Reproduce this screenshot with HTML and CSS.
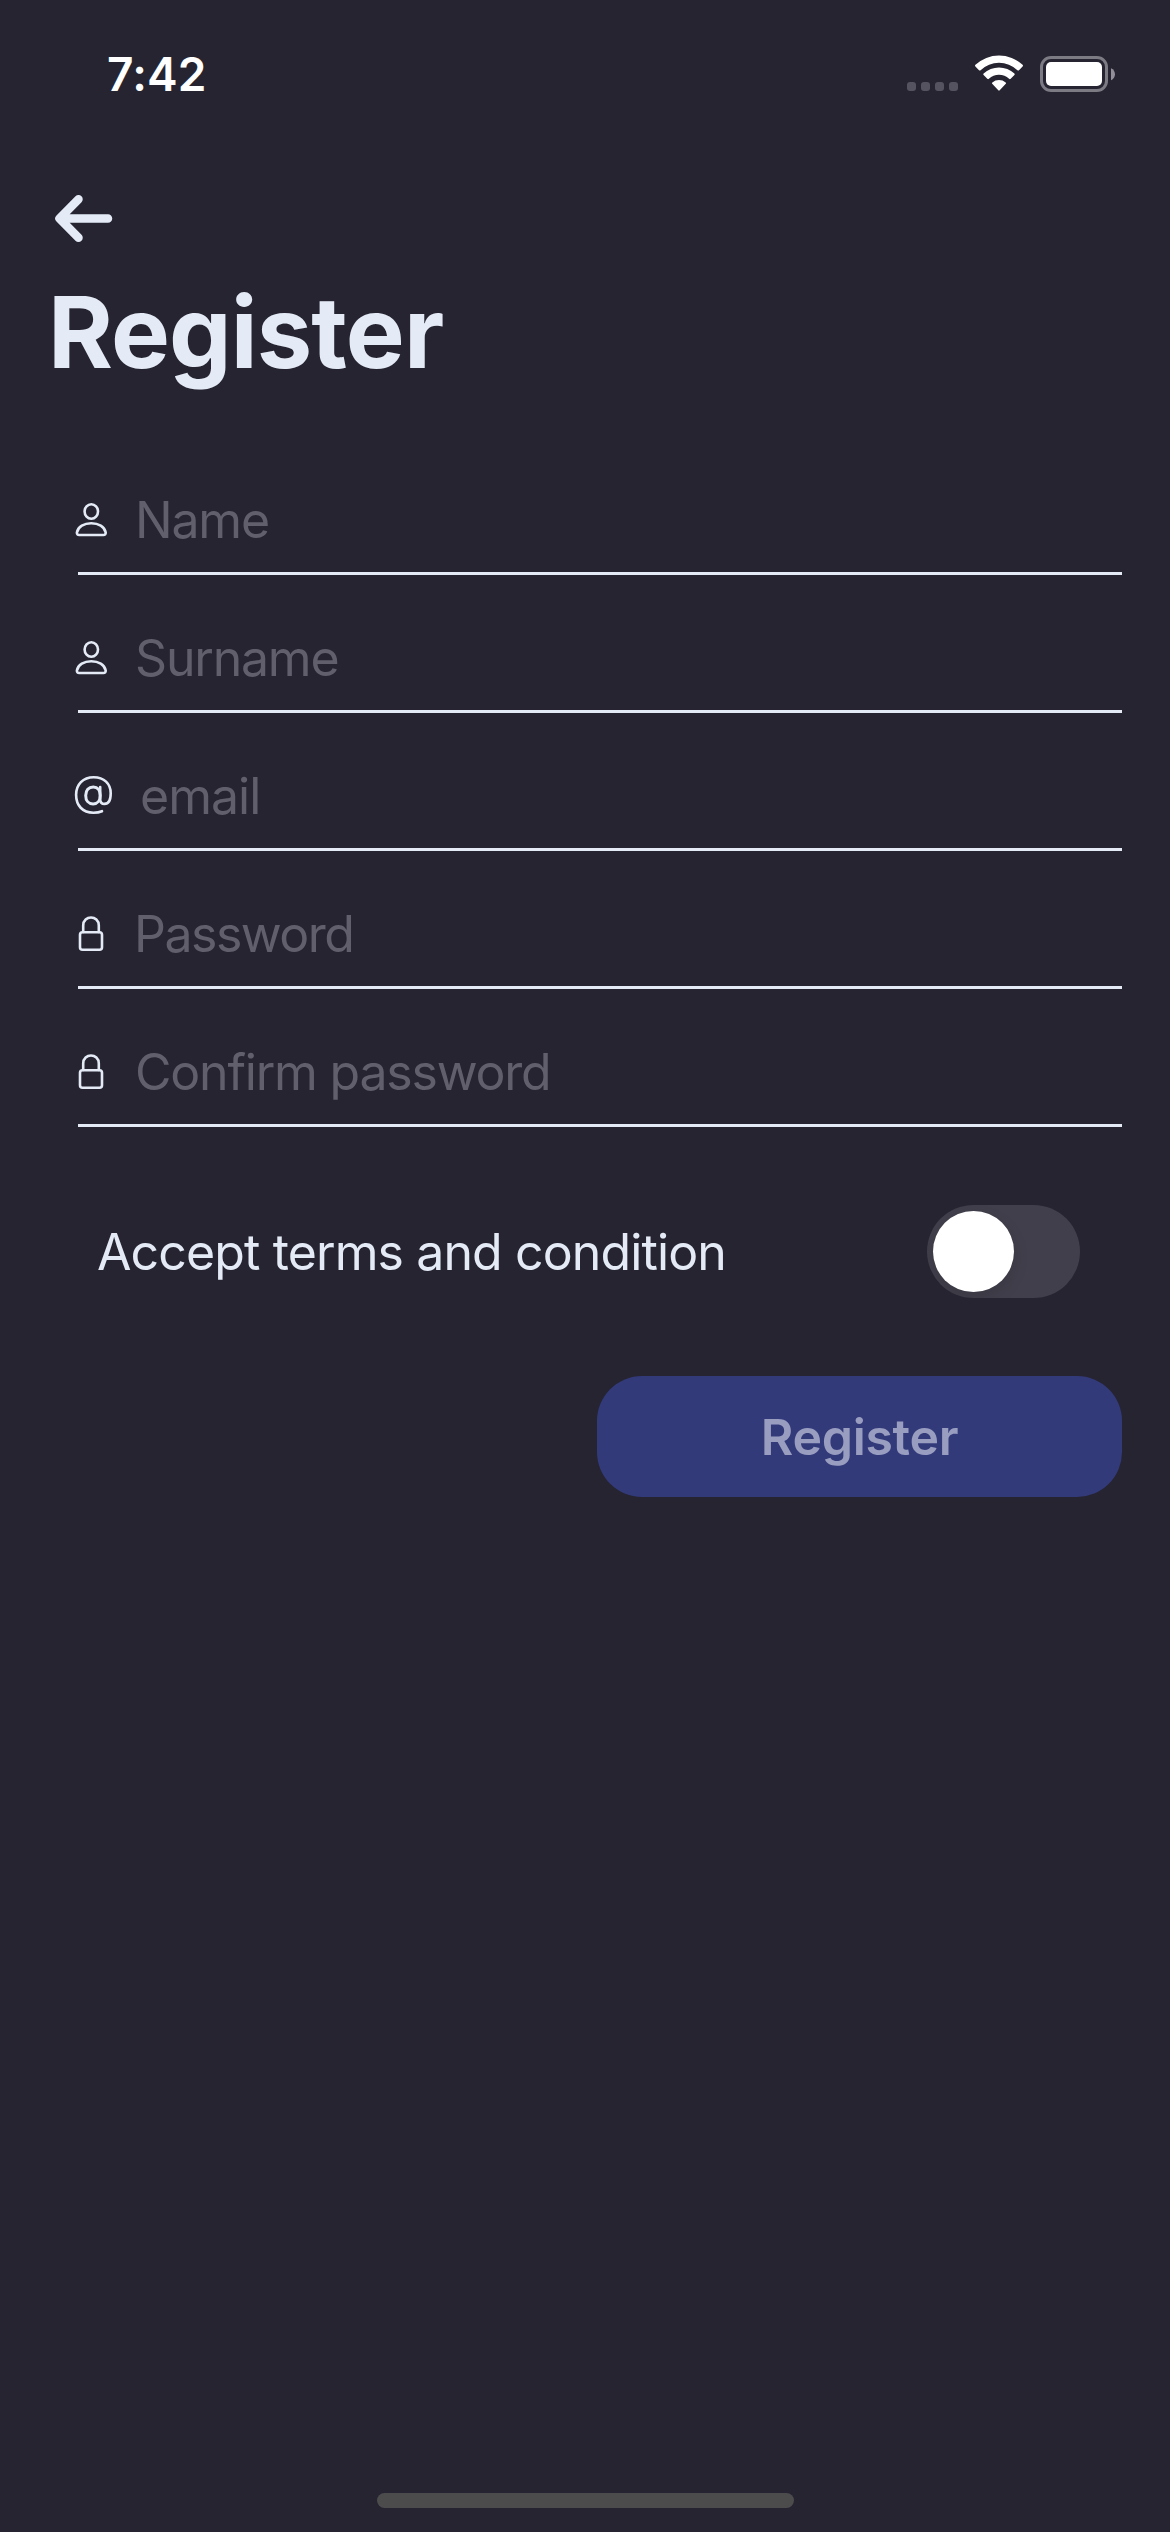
FILE: index.html
```html
<!DOCTYPE html>
<html lang="en">
<head>
<meta charset="utf-8">
<title>Register</title>
<link rel="stylesheet" href="styles.css">
</head>
<body>
<div class="screen">
  <header class="status">
    <span class="time">7:42</span>
    <svg class="status-icons" width="210" height="40" viewBox="906 54 210 40">
      <g fill="#55535f">
        <rect x="907" y="82" width="9" height="9" rx="3"/>
        <rect x="921" y="82" width="9" height="9" rx="3"/>
        <rect x="935" y="82" width="9" height="9" rx="3"/>
        <rect x="949" y="82" width="9" height="9" rx="3"/>
      </g>
      <g fill="#fff">
        <path d="M975.4 66.4Q974.6 65.6 975.4 64.8A34.5 34.5 0 0 1 1022.6 64.8Q1023.4 65.6 1022.6 66.4L1019 70.2Q1018.2 71 1017.4 70.2A26.5 26.5 0 0 0 980.6 70.2Q979.8 71 979 70.2Z"/>
        <path d="M983.6 75.1Q982.8 74.3 983.6 73.5A22.5 22.5 0 0 1 1014.4 73.5Q1015.2 74.3 1014.4 75.1L1010.7 78.8Q1009.9 79.6 1009.1 78.8A14.8 14.8 0 0 0 988.9 78.8Q988.1 79.6 987.3 78.8Z"/>
        <path d="M992.2 83.7Q991.5 83 992.3 82.4A10.7 10.7 0 0 1 1005.7 82.4Q1006.5 83 1005.8 83.7L999.7 90.3Q999 91 998.3 90.3Z"/>
        <rect x="1046" y="62" width="56" height="24" rx="5"/>
      </g>
      <rect x="1041.5" y="57.5" width="65" height="33" rx="9.5" fill="none" stroke="#7c7a83" stroke-width="3"/>
      <path d="M1111 68.2C1116.3 70.2 1116.3 78.2 1111 80.2Z" fill="#928f99"/>
    </svg>
  </header>
  <svg class="back" width="60" height="50" viewBox="54 193 60 50" fill="none" stroke="#e4ebf7" stroke-width="8.5" stroke-linecap="round" stroke-linejoin="round"><path d="M78.5 199.2L59.5 218.5L78.5 237.8M59.5 218.5H108"/></svg>
  <h1>Register</h1>
  <form class="form">
    <div class="field">
      <svg class="icon" width="45" height="60" viewBox="0 0 45 60"><ellipse cx="19.3" cy="21.5" rx="6.7" ry="7.3"/><path d="M7.2 45H31.4Q33.8 45 33.7 42.5C32.5 36.5 26.5 33.2 19.3 33.2S6 36.5 4.9 42.5Q4.8 45 7.2 45Z"/></svg>
      <span class="hint name">Name</span>
    </div>
    <div class="field">
      <svg class="icon" width="45" height="60" viewBox="0 0 45 60"><ellipse cx="19.3" cy="21.5" rx="6.7" ry="7.3"/><path d="M7.2 45H31.4Q33.8 45 33.7 42.5C32.5 36.5 26.5 33.2 19.3 33.2S6 36.5 4.9 42.5Q4.8 45 7.2 45Z"/></svg>
      <span class="hint surname">Surname</span>
    </div>
    <div class="field">
      <svg class="icon" width="45" height="60" viewBox="0 0 45 60"><path d="M30 45.2Q26.5 46.7 21.5 46.7C10.500 46.7 4.100 39.500 4.100 28.800C4.100 18.500 11 11.200 21.700 11.200C32 11.200 38.700 17.700 38.700 27.200C38.700 34.300 36.200 37.900 32.500 37.900C29.800 37.900 28.200 36.200 28.200 33.200V21"/><path d="M28.200 29.400C28.200 24.200 25.700 20.900 21.300 20.900C16.600 20.900 13.700 24.200 13.700 29.400C13.700 34.700 16.500 37.900 21.100 37.900C25.500 37.900 28.200 34.500 28.200 29.400Z" stroke-width="3"/></svg>
      <span class="hint email">email</span>
    </div>
    <div class="field">
      <svg class="icon" width="45" height="60" viewBox="0 0 45 60"><rect x="8" y="28.2" width="22" height="17.6" rx="2.5"/><path d="M11.2 28V21.5C11.2 10.8 26.8 10.8 26.8 21.5V28"/></svg>
      <span class="hint password">Password</span>
    </div>
    <div class="field">
      <svg class="icon" width="45" height="60" viewBox="0 0 45 60"><rect x="8" y="28.2" width="22" height="17.6" rx="2.5"/><path d="M11.2 28V21.5C11.2 10.8 26.8 10.8 26.8 21.5V28"/></svg>
      <span class="hint confirm">Confirm password</span>
    </div>
    <div class="terms">
      <span class="terms-label">Accept terms and condition</span>
      <span class="switch"><span class="knob"></span></span>
    </div>
    <button class="submit" type="button" disabled>Register</button>
  </form>
  <div class="home"></div>
</div>
</body>
</html>
```
FILE: styles.css
```css
* { box-sizing: border-box; }
body {
  margin: 0;
  background: #262431;
  color: #e4ebf7;
  font-family: Inter, "Liberation Sans", sans-serif;
}
.screen {
  width: 1170px;
  height: 2532px;
  display: flex;
  flex-direction: column;
}
.status {
  height: 193px;
  padding: 46px 54px 0 107px;
  display: flex;
  justify-content: space-between;
  align-items: flex-start;
}
.time {
  font-size: 46px;
  line-height: 56px;
  font-weight: 600;
  letter-spacing: .2px;
  color: #fff;
}
.status-icons { margin-top: 8px; }
.back { margin-left: 54px; flex: none; }
h1 {
  margin: 29px 0 0 48px;
  font-size: 99px;
  line-height: 120px;
  font-weight: 700;
  letter-spacing: -.85px;
  white-space: nowrap;
}
.form {
  margin: 45px 48px 0 78px;
  display: flex;
  flex-direction: column;
}
.field {
  height: 138px;
  padding-bottom: 22px;
  border-bottom: 3px solid #e4ebf7;
  display: flex;
  align-items: flex-end;
}
.icon {
  margin-left: -6px;
  flex: none;
  fill: none;
  stroke: #e4ebf7;
  stroke-width: 2.6;
  stroke-linecap: round;
  stroke-linejoin: round;
}
.hint {
  margin-left: 18px;
  font-size: 50px;
  line-height: 60px;
  letter-spacing: -1.2px;
  color: #625f6d;
  white-space: nowrap;
}
.email { margin-left: 23px; letter-spacing: -1px; }
.password { margin-left: 17px; letter-spacing: -1.5px; }
.terms {
  height: 93px;
  margin: 78px 42px 0 18px;
  display: flex;
  justify-content: space-between;
  align-items: center;
}
.terms-label {
  margin-left: 1px;
  font-size: 50px;
  line-height: 60px;
  letter-spacing: -.88px;
  white-space: nowrap;
}
.switch {
  width: 153px;
  height: 93px;
  padding: 6px;
  border-radius: 47px;
  background: #413f4b;
  overflow: hidden;
}
.knob {
  display: block;
  width: 81px;
  height: 81px;
  border-radius: 50%;
  background: #fff;
  box-shadow: 0 6px 16px rgba(0, 0, 0, .12);
}
.submit {
  align-self: flex-end;
  width: 525px;
  height: 121px;
  margin-top: 78px;
  padding: 0;
  border: 0;
  border-radius: 45px;
  background: #323a7a;
  color: #999dc0;
  font-family: inherit;
  font-size: 50px;
  line-height: 60px;
  font-weight: 600;
  letter-spacing: -.3px;
}
.home {
  width: 417px;
  height: 15px;
  margin: auto auto 24px;
  border-radius: 8px;
  background: #4c4c4c;
}
```
